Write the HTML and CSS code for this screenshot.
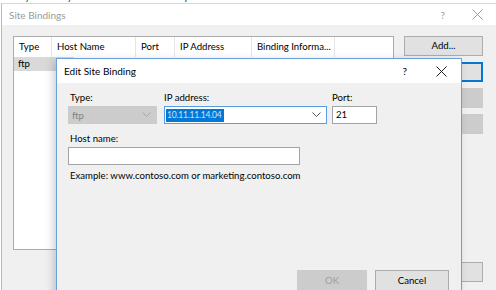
FILE: index.html
```html
<!DOCTYPE html>
<html>
<head>
<meta charset="utf-8">
<link rel="stylesheet" href="styles.css">
</head>
<body>
<div class="strip"><span class="strip-text">Turn your anonymous credentials below to protect</span><span class="strip-text2">a on rule</span></div>
<div class="window">
  <div class="titlebar">
    <span class="title">Site Bindings</span>
    <span class="tb-help">?</span>
    <svg class="tb-close" width="11" height="11" viewBox="0 0 11 11"><path d="M0.5 0.5L10.5 10.5M10.5 0.5L0.5 10.5" stroke="#9a9a9a" stroke-width="1" fill="none"/></svg>
  </div>
  <div class="wbody">
    <div class="list">
      <div class="lhead">
        <div class="hcol w-type">Type</div>
        <div class="hcol w-host">Host Name</div>
        <div class="hcol w-port">Port</div>
        <div class="hcol w-ip">IP Address</div>
        <div class="hcol w-bind">Binding Informa...</div>
      </div>
      <div class="lrow">
        <div class="cell w-type sel">ftp</div>
      </div>
    </div>
    <div class="btns">
      <div class="btn">Add...</div>
      <div class="btn focus"></div>
      <div class="btn dis"></div>
      <div class="btn dis"></div>
      <div class="btn bottom"></div>
    </div>
  </div>
</div>

<div class="dialog">
  <div class="dtitle">
    <span class="dtitle-text">Edit Site Binding</span>
    <span class="d-help">?</span>
    <svg class="d-close" width="11" height="11" viewBox="0 0 11 11"><path d="M0.5 0.5L10.5 10.5M10.5 0.5L0.5 10.5" stroke="#1a1a1a" stroke-width="1" fill="none"/></svg>
  </div>
  <div class="dbody">
    <div class="row1">
      <div class="field f-type">
        <div class="lbl pad">Type:</div>
        <div class="combo disabled">
          <span class="ctext">ftp</span>
          <svg class="chev" width="9" height="6" viewBox="0 0 9 6"><path d="M0.5 0.5L4.5 4.5L8.5 0.5" stroke="#a8a8a8" fill="none"/></svg>
        </div>
      </div>
      <div class="field f-ip">
        <div class="lbl">IP address:</div>
        <div class="combo focused">
          <span class="hl">10.11.11.14.04</span>
          <svg class="chev" width="9" height="6" viewBox="0 0 9 6"><path d="M0.5 0.5L4.5 4.5L8.5 0.5" stroke="#555" fill="none"/></svg>
        </div>
      </div>
      <div class="field f-port">
        <div class="lbl">Port:</div>
        <div class="tbox port">21</div>
      </div>
    </div>
    <div class="lbl pad host-lbl">Host name:</div>
    <div class="tbox host"></div>
    <div class="example">Example: www.contoso.com or marketing.contoso.com</div>
    <div class="footer">
      <div class="dbtn dis">OK</div>
      <div class="dbtn cancel">Cancel</div>
    </div>
  </div>
</div>
</body>
</html>
```

FILE: styles.css
```css
html, body {
  margin: 0;
  padding: 0;
}
body {
  width: 496px;
  height: 290px;
  overflow: hidden;
  position: relative;
  background: #ffffff;
  font-family: Lato, "Noto Sans", sans-serif;
  font-size: 9.6px;
  color: #000;
}
.strip {
  height: 3px;
  overflow: hidden;
  white-space: nowrap;
  line-height: 10px;
}
.strip-text, .strip-text2 {
  display: inline-block;
  margin-top: -8px;
  color: #222;
  font-size: 9.6px;
  vertical-align: top;
}
.strip-text { margin-left: 4px; }
.strip-text2 { margin-left: 48px; }

.window {
  margin-left: 1px;
  border-left: 1px solid #a9bed4;
  border-top: 1px solid #d8d8d8;
  height: 287px;
  background: #f0f0f0;
  display: flex;
  flex-direction: column;
}
.titlebar {
  height: 21px;
  background: #ffffff;
  display: flex;
  align-items: center;
  padding-left: 7px;
  flex-shrink: 0;
}
.title {
  color: #9a9a9a;
  font-size: 10px;
  flex: 1;
}
.tb-help {
  color: #9a9a9a;
  font-size: 10px;
  margin-right: 27px;
}
.tb-close {
  margin-right: 13px;
}

.wbody {
  display: flex;
  padding: 11px 0 0 11px;
  flex: 1;
}
.list {
  width: 379px;
  height: 212px;
  border: 1px solid #ababab;
  background: #ffffff;
}
.lhead {
  display: flex;
  height: 20px;
}
.hcol {
  height: 20px;
  line-height: 20px;
  padding-left: 5px;
  box-sizing: border-box;
  border-right: 1px solid #e5e5e5;
  white-space: nowrap;
  overflow: hidden;
}
.w-type { width: 38px; }
.w-host { width: 84px; }
.w-port { width: 39px; }
.w-ip { width: 77px; }
.w-bind { width: 83px; }
.lrow {
  display: flex;
  height: 14px;
}
.cell {
  line-height: 13px;
  padding-left: 4px;
  box-sizing: border-box;
}
.cell.sel {
  background: #d9d9d9;
  width: 60px;
}

.btns {
  margin-left: 10px;
  display: flex;
  flex-direction: column;
  gap: 6px;
  width: 79px;
}
.btn {
  height: 20px;
  box-sizing: border-box;
  border: 1px solid #adadad;
  background: #e1e1e1;
  text-align: center;
  line-height: 18px;
}
.btn.focus {
  border: 2px solid #0078d7;
}
.btn.dis {
  background: #cccccc;
  border-color: #cccccc;
}
.btn.bottom {
  margin-top: 122px;
}

/* Dialog overlay */
.dialog {
  position: absolute;
  left: 56px;
  top: 58px;
  width: 404px;
  height: 250px;
  border: 1px solid #67a0da;
  background: #f0f0f0;
  box-shadow: -3px 2px 8px rgba(0, 0, 0, 0.18);
  display: flex;
  flex-direction: column;
}
.dtitle {
  height: 24px;
  background: #ffffff;
  display: flex;
  align-items: center;
  padding-left: 7px;
  flex-shrink: 0;
}
.dtitle-text {
  flex: 1;
  font-size: 10px;
}
.d-help {
  font-size: 10px;
  margin-right: 29px;
}
.d-close {
  margin-right: 14px;
}
.dbody {
  padding: 7px 12px 0 11px;
  display: flex;
  flex-direction: column;
  flex: 1;
}
.row1 {
  display: flex;
}
.field {
  display: flex;
  flex-direction: column;
}
.f-type { width: 89px; margin-right: 7px; }
.f-ip { width: 163px; margin-right: 5px; }
.f-port { width: 45px; }
.lbl {
  height: 16px;
  line-height: 16px;
  white-space: nowrap;
}
.lbl.pad { padding-left: 2px; }
.combo {
  height: 18px;
  box-sizing: border-box;
  display: flex;
  align-items: center;
  justify-content: space-between;
  padding: 0 5px 0 1px;
}
.combo.disabled {
  background: #cccccc;
  border: 1px solid #cccccc;
}
.combo.disabled .ctext {
  color: #838383;
  padding-left: 2px;
}
.combo.focused {
  background: #ffffff;
  border: 1px solid #569de5;
}
.hl {
  background: #0078d7;
  color: #cfe3f7;
  height: 13px;
  line-height: 13px;
  padding: 0 2px 0 1px;
  font-size: 8.5px;
  letter-spacing: -0.2px;
  white-space: nowrap;
}
.tbox {
  height: 18px;
  box-sizing: border-box;
  background: #ffffff;
  border: 1px solid #a3a3a3;
  line-height: 16px;
  padding-left: 3px;
}
.host-lbl {
  margin-top: 7px;
}
.tbox.host {
  width: 232px;
}
.example {
  margin-top: 3px;
  line-height: 16px;
  padding-left: 2px;
}
.footer {
  margin-top: 86px;
  display: flex;
  justify-content: flex-end;
  gap: 8px;
}
.dbtn {
  height: 21px;
  box-sizing: border-box;
  text-align: center;
  line-height: 19px;
}
.dbtn.dis {
  width: 70px;
  background: #cccccc;
  border: 1px solid #cccccc;
  color: #a0a0a0;
}
.dbtn.cancel {
  width: 74px;
  background: #e1e1e1;
  border: 1px solid #adadad;
}
```
